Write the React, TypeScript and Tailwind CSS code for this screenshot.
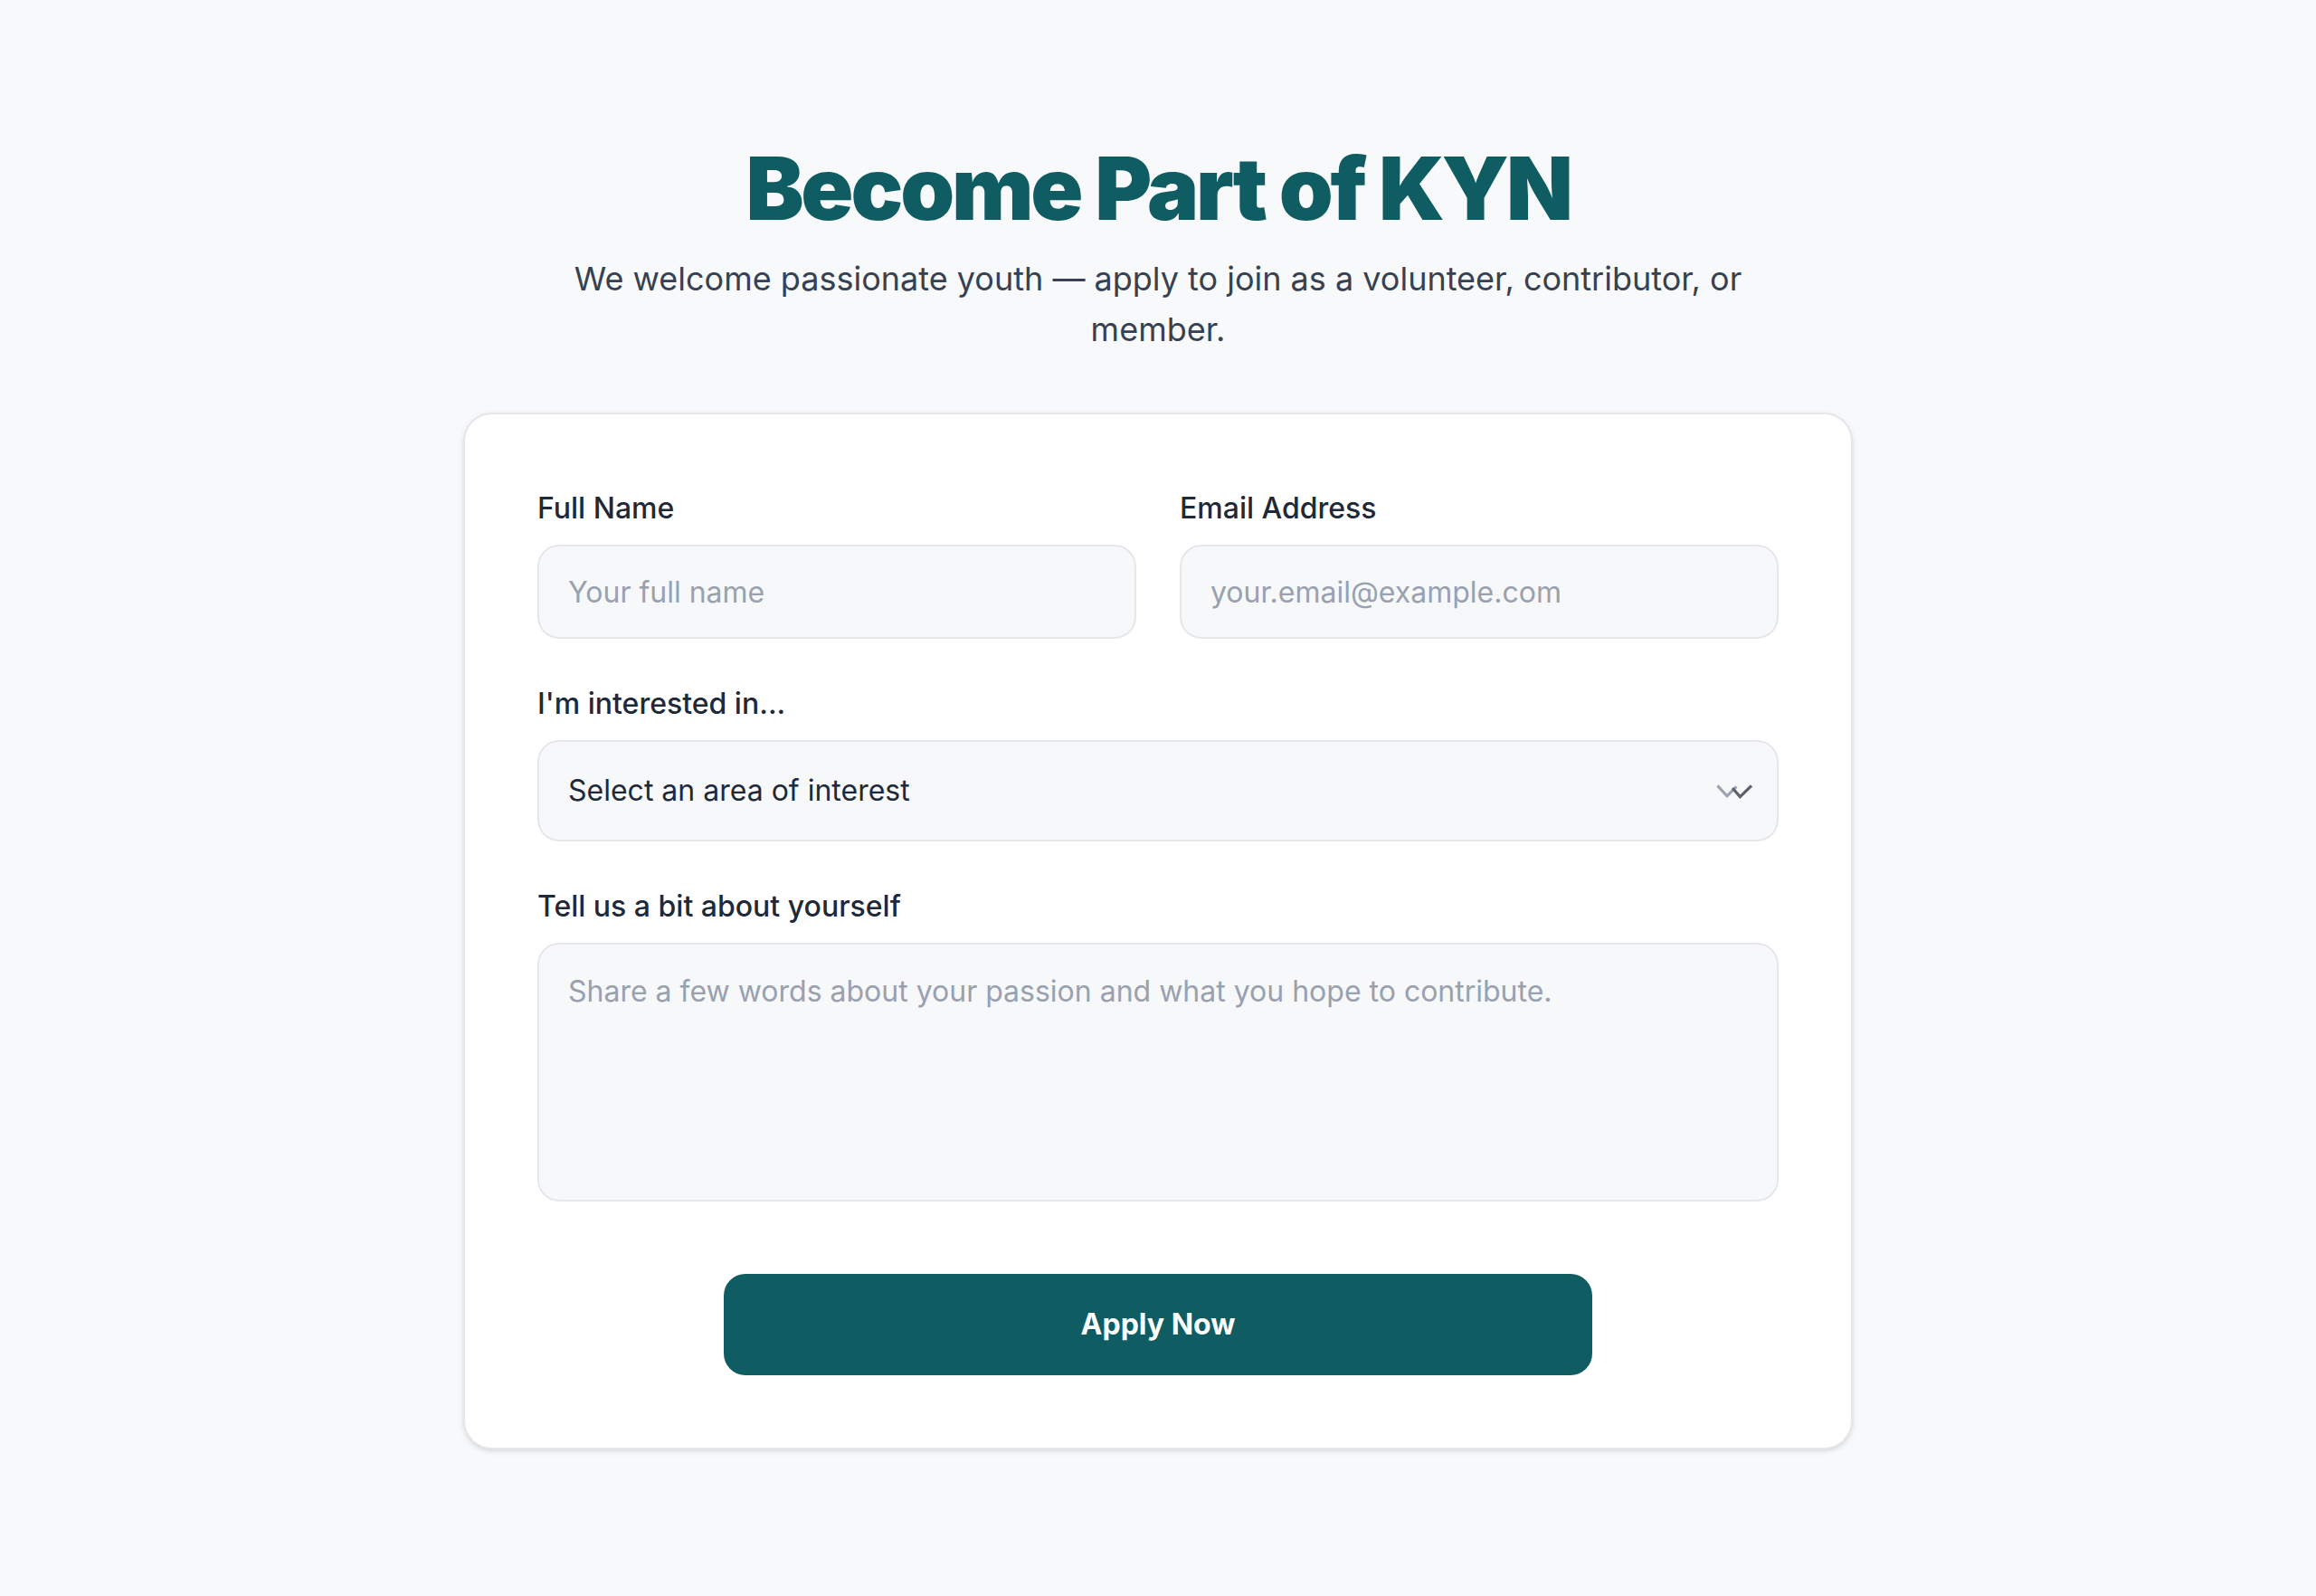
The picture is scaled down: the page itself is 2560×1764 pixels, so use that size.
import { useState } from "react"

export default function App() {
  const [interest, setInterest] = useState("")

  return (
    <div className="min-h-screen bg-[#f8f9fa] font-['Inter','Noto_Sans',sans-serif]">
      <div className="[zoom:2]">
        <main className="max-w-3xl mx-auto pt-20 pb-20">
          {/* Header */}
          <div className="text-center mb-8">
            <h1 className="text-5xl leading-none font-black tracking-[-0.033em] text-[#0f5c63] mb-3">
              Become Part of KYN
            </h1>
            <p className="text-lg text-gray-700 max-w-2xl mx-auto">
              We welcome passionate youth — apply to join as a volunteer, contributor, or member.
            </p>
          </div>

          {/* Form card */}
          <form
            className="bg-white border border-gray-200 rounded-2xl shadow-sm p-10 flex flex-col gap-6"
            onSubmit={(e) => e.preventDefault()}
          >
            <div className="grid grid-cols-2 gap-6">
              <div>
                <label className="block text-base leading-6 font-medium text-gray-800 mb-2">Full Name</label>
                <input
                  type="text"
                  placeholder="Your full name"
                  className="w-full h-[52px] px-4 text-base bg-[#f7f8fa] border border-gray-200 rounded-xl text-gray-800 placeholder:text-gray-400 outline-none"
                />
              </div>
              <div>
                <label className="block text-base leading-6 font-medium text-gray-800 mb-2">Email Address</label>
                <input
                  type="email"
                  placeholder="your.email@example.com"
                  className="w-full h-[52px] px-4 text-base bg-[#f7f8fa] border border-gray-200 rounded-xl text-gray-800 placeholder:text-gray-400 outline-none"
                />
              </div>
            </div>

            <div>
              <label className="block text-base leading-6 font-medium text-gray-800 mb-2">I'm interested in...</label>
              <div className="relative">
                <select
                  value={interest}
                  onChange={(e) => setInterest(e.target.value)}
                  className="w-full h-14 px-4 text-base bg-[#f7f8fa] border border-gray-200 rounded-xl text-gray-800 appearance-none outline-none"
                >
                  <option value="">Select an area of interest</option>
                  <option value="volunteer">Volunteering</option>
                  <option value="contributor">Contributing</option>
                  <option value="member">Membership</option>
                </select>
                <svg
                  className="absolute right-[14px] top-1/2 -translate-y-1/2 pointer-events-none"
                  width="21"
                  height="9"
                  viewBox="0 0 21 9"
                  fill="none"
                  strokeWidth="1.6"
                >
                  <polyline points="1.2,1.7 6.5,7.4 11.7,2.2" stroke="#9ca3af" />
                  <polyline points="9.5,3 13.7,7.8 20,1.7" stroke="#5b626d" />
                </svg>
              </div>
            </div>

            <div>
              <label className="block text-base leading-6 font-medium text-gray-800 mb-2">Tell us a bit about yourself</label>
              <textarea
                placeholder="Share a few words about your passion and what you hope to contribute."
                className="w-full h-[143px] px-4 py-3.5 text-base bg-[#f7f8fa] border border-gray-200 rounded-xl text-gray-800 placeholder:text-gray-400 outline-none resize-none block"
              />
            </div>

            <div className="pt-4">
              <button
                type="submit"
                className="block w-full max-w-[480px] mx-auto py-4 bg-[#0f5c63] text-white text-base font-bold rounded-xl"
              >
                Apply Now
              </button>
            </div>
          </form>
        </main>
      </div>
    </div>
  )
}
